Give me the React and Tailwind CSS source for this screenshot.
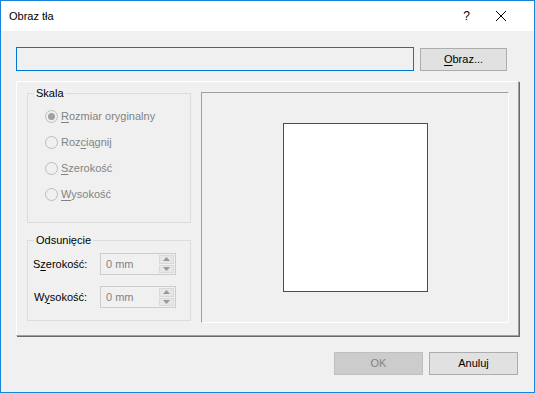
import React from 'react';

const font = { fontFamily: '"Liberation Sans", Arial, sans-serif' };

const U = ({ children }) => <span className="underline underline-offset-2">{children}</span>;

const Radio = ({ checked, children }) => (
  <div className="flex items-center h-[13px] gap-[3px]">
    <div className="w-[13px] h-[13px] rounded-full border border-[#bcbcbc] bg-[#f0f0f0] flex items-center justify-center">
      {checked && <div className="w-[7px] h-[7px] rounded-full bg-[#a0a0a0]" />}
    </div>
    <span className="text-[#838383] leading-none">{children}</span>
  </div>
);

const Spin = () => (
  <div className="w-[76px] h-[22px] border border-[#cccccc] bg-[#f0f0f0] flex items-center">
    <span className="flex-1 pl-[5px] text-[#838383] leading-none">0 mm</span>
    <div className="w-[17px] h-full flex flex-col gap-px p-px">
      <div className="flex-1 bg-[#e6e6e6] border border-[#d9d9d9] flex items-center justify-center">
        <svg width="7" height="4" viewBox="0 0 7 4"><path d="M3.5 0L7 4H0z" fill="#999" /></svg>
      </div>
      <div className="flex-1 bg-[#e6e6e6] border border-[#d9d9d9] flex items-center justify-center">
        <svg width="7" height="4" viewBox="0 0 7 4"><path d="M0 0h7L3.5 4z" fill="#999" /></svg>
      </div>
    </div>
  </div>
);

const Group = ({ title, className, children }) => (
  <div className={`relative border border-[#dcdcdc] ${className}`}>
    <span className="absolute -top-[9px] left-[6px] px-[2px] bg-[#f0f0f0] leading-[16px] text-black">{title}</span>
    {children}
  </div>
);

export default function App() {
  return (
    <div className="w-[535px] h-[393px] border border-[#1883d7] bg-[#f0f0f0] flex flex-col text-[11px]" style={font}>
      {/* Title bar */}
      <div className="h-[30px] bg-white flex items-center pl-[8px] pr-[28px] shrink-0">
        <span className="flex-1 text-black text-[11px]">Obraz tła</span>
        <span className="text-black text-[12px] mr-[26px]">?</span>
        <svg width="10" height="10" viewBox="0 0 10 10"><path d="M0 0L10 10M10 0L0 10" stroke="#000" strokeWidth="1" /></svg>
      </div>

      {/* Body */}
      <div className="flex-1 flex flex-col px-[15px] pt-[16px]">
        <div className="flex items-end gap-[6px]">
          <div className="w-[398px] h-[24px] bg-[#0078d7] p-px">
            <div className="w-full h-full bg-[#f0f0f0]" />
          </div>
          <button className="w-[87px] h-[23px] border border-[#adadad] bg-[#e1e1e1] text-black leading-none">
            <U>O</U>braz...
          </button>
        </div>

        <div className="mt-[10px] w-[503px] h-[255px] border-l border-t border-white border-r border-b border-r-[#a0a0a0] border-b-[#a0a0a0] shadow-[1px_1px_0_#696969] flex pl-[10px] pt-[10px] gap-[10px]">
          <div className="flex flex-col pt-[1px] w-[164px]">
            <Group title="Skala" className="h-[130px] pt-[16px] pl-[17px] flex flex-col gap-[13px]">
              <Radio checked><U>R</U>ozmiar oryginalny</Radio>
              <Radio>Roz<U>c</U>iągnij</Radio>
              <Radio><U>S</U>zerokość</Radio>
              <Radio><U>W</U>ysokość</Radio>
            </Group>
            <Group title="Odsunięcie" className="mt-[17px] h-[81px] pt-[12px] pl-[5px] flex flex-col gap-[11px]">
              <div className="flex items-center">
                <span className="w-[67px] text-black">S<U>z</U>erokość:</span>
                <Spin />
              </div>
              <div className="flex items-center">
                <span className="w-[67px] text-black pl-[1px]">W<U>y</U>sokość:</span>
                <Spin />
              </div>
            </Group>
          </div>

          <div className="w-[308px] h-[231px] border-l border-t border-[#a0a0a0] border-r border-b border-r-white border-b-white flex justify-center pt-[30px]">
            <div className="w-[145px] h-[169px] bg-[#ff0000] p-px">
              <div className="w-full h-full bg-white" />
            </div>
          </div>
        </div>

        <div className="mt-[16px] flex justify-end gap-[6px] pr-[1px]">
          <button className="w-[89px] h-[23px] border border-[#bfbfbf] bg-[#cccccc] text-[#838383] leading-none">OK</button>
          <button className="w-[89px] h-[23px] border border-[#adadad] bg-[#e1e1e1] text-black leading-none">Anuluj</button>
        </div>
      </div>
    </div>
  );
}
